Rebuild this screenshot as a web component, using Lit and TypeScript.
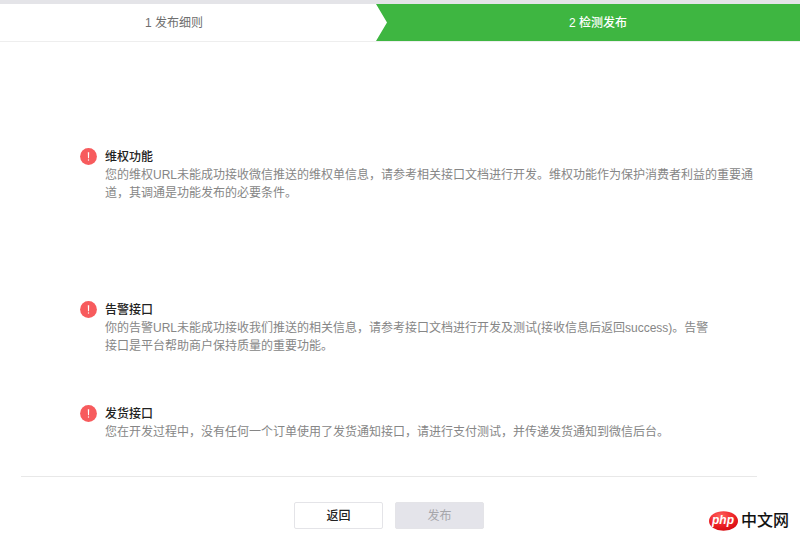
import { LitElement, html, css } from "lit";
import { customElement } from "lit/decorators.js";

interface Notice {
  title: string;
  lines: string[];
}

const notices: Notice[] = [
  {
    title: "维权功能",
    lines: [
      "您的维权URL未能成功接收微信推送的维权单信息，请参考相关接口文档进行开发。维权功能作为保护消费者利益的重要通",
      "道，其调通是功能发布的必要条件。",
    ],
  },
  {
    title: "告警接口",
    lines: [
      "你的告警URL未能成功接收我们推送的相关信息，请参考接口文档进行开发及测试(接收信息后返回success)。告警",
      "接口是平台帮助商户保持质量的重要功能。",
    ],
  },
  {
    title: "发货接口",
    lines: ["您在开发过程中，没有任何一个订单使用了发货通知接口，请进行支付测试，并传递发货通知到微信后台。"],
  },
];

@customElement("app-root")
export class AppRoot extends LitElement {
  static styles = css`
    :host {
      display: block;
      position: relative;
      min-height: 100vh;
      box-sizing: border-box;
      background: #fff;
      border-top: 4px solid #e4e4e8;
      font: 12px/18px "Liberation Sans", "Noto Sans CJK SC", sans-serif;
      color: #868686;
    }
    .steps {
      display: flex;
      margin: 0;
      padding: 0;
      list-style: none;
      border-bottom: 1px solid #eeeeee;
      text-align: center;
      line-height: 35px;
    }
    .step {
      width: 47%;
      box-sizing: border-box;
      padding: 2px 28px 0 0;
      color: #6e6e6e;
    }
    .current {
      width: 53%;
      padding: 2px 0 0 20px;
      color: #fff;
      font-weight: 500;
      background: #3eb641;
      clip-path: polygon(0 0, 100% 0, 100% 100%, 0 100%, 11px 50%);
    }
    .notices {
      display: flex;
      flex-direction: column;
      margin: 0 43px 0 21px;
      padding: 106px 0 35px 59px;
      border-bottom: 1px solid #e8e8e8;
    }
    .notice {
      display: flex;
      gap: 8px;
    }
    .notice:nth-child(2) {
      margin: 99px 0 50px;
    }
    .icon {
      flex: none;
      width: 17px;
      height: 17px;
    }
    .title {
      margin: 0;
      font-size: 12px;
      font-weight: 500;
      color: #222;
    }
    .text {
      margin: 0;
      white-space: nowrap;
    }
    .actions {
      display: flex;
      justify-content: center;
      gap: 12px;
      padding: 25px 22px 12px 0;
    }
    .button {
      width: 89px;
      height: 27px;
      box-sizing: border-box;
      padding: 0;
      border: 1px solid #e4e4e8;
      border-radius: 2px;
      background: #fff;
      color: #222;
      font: inherit;
      font-weight: 500;
    }
    .button:disabled {
      background: #e4e4ea;
      color: #a6a6aa;
      font-weight: 400;
    }
    .brand {
      position: absolute;
      right: 11px;
      bottom: 10px;
      display: flex;
      align-items: center;
      gap: 3px;
      height: 20px;
      color: #111;
      font-size: 16px;
      font-weight: 500;
      line-height: 20px;
    }
    .badge {
      width: 29px;
      height: 20px;
    }
    .php {
      font: italic bold 12px "Liberation Sans", sans-serif;
      fill: #fff;
      text-anchor: middle;
    }
  `;

  render() {
    return html`
      <ol class="steps">
        <li class="step">1 发布细则</li>
        <li class="step current" aria-current="step">2 检测发布</li>
      </ol>
      <main>
        <div class="notices">
          ${notices.map(
            (n) => html`
              <section class="notice">
                <svg class="icon" viewBox="0 0 17 17" aria-hidden="true">
                  <circle cx="8.5" cy="8.5" r="8.4" fill="#f75b5d" />
                  <path d="M7.8 4.2h1.4l-.2 6h-1z" fill="#fff" />
                  <circle cx="8.5" cy="12" r=".7" fill="#fff" />
                </svg>
                <div>
                  <h2 class="title">${n.title}</h2>
                  <p class="text">${n.lines.map((l, i) => (i ? html`<br />${l}` : l))}</p>
                </div>
              </section>
            `
          )}
        </div>
        <div class="actions">
          <button class="button" type="button">返回</button>
          <button class="button" type="button" disabled>发布</button>
        </div>
      </main>
      <div class="brand">
        <svg class="badge" viewBox="0 0 29 20">
          <defs>
            <radialGradient id="red" cx="40%" cy="25%" r="80%">
              <stop offset="0" stop-color="#ff6460" />
              <stop offset=".5" stop-color="#f0292c" />
              <stop offset="1" stop-color="#d5080f" />
            </radialGradient>
          </defs>
          <ellipse cx="14.5" cy="10" rx="14.5" ry="9.8" fill="url(#red)" />
          <text class="php" x="14" y="13">php</text>
        </svg>
        <span>中文网</span>
      </div>
    `;
  }
}
